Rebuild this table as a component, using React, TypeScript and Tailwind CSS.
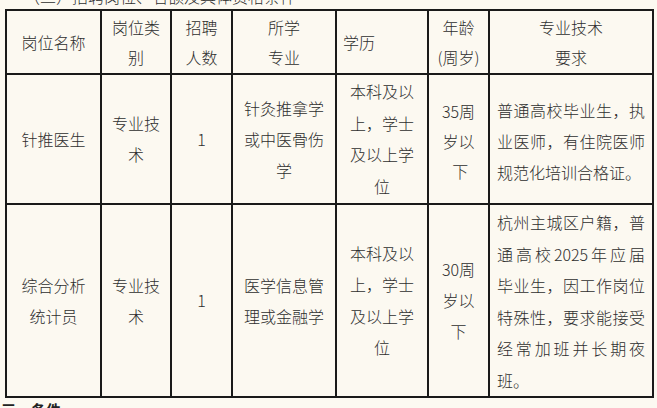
export default function App() {
  const cell = "bg-[#fcf9f1] flex flex-col justify-center";
  const center = `${cell} items-center text-center`;
  const just = "[text-align-last:justify] text-justify";

  return (
    <div className="w-[657px] h-[408px] overflow-hidden bg-[#fcf9f1] text-[#2e2e2e] text-[16px] font-light font-['Noto_Sans_CJK_SC',sans-serif]">
      {/* clipped caption above the table */}
      <div className="-mt-[14px] pl-[24px] leading-[20px] whitespace-nowrap">（二）招聘岗位、名额及具体资格条件</div>

      <div className="ml-[5px] mt-[3px] w-[649px] grid grid-cols-[93px_68px_59px_102px_90px_59px_162px] grid-rows-[62px_128px_191px] gap-[2px] p-[2px] bg-[#1a1a1a]">
        {/* header */}
        <div className={`${center} leading-[30px]`}>岗位名称</div>
        <div className={`${center} leading-[30px]`}>
          <div>岗位类</div>
          <div>别</div>
        </div>
        <div className={`${center} leading-[30px]`}>
          <div>招聘</div>
          <div>人数</div>
        </div>
        <div className={`${center} leading-[30px]`}>
          <div>所学</div>
          <div>专业</div>
        </div>
        <div className={`${cell} pl-[6px] leading-[30px]`}>学历</div>
        <div className={`${center} leading-[30px]`}>
          <div>年龄</div>
          <div>(周岁)</div>
        </div>
        <div className={`${center} leading-[30px]`}>
          <div>专业技术</div>
          <div>要求</div>
        </div>

        {/* row 1 */}
        <div className={`${center} leading-[31px]`}>针推医生</div>
        <div className={`${center} leading-[31px]`}>
          <div>专业技</div>
          <div>术</div>
        </div>
        <div className={`${center} leading-[31px]`}>1</div>
        <div className={`${center} leading-[31px]`}>
          <div>针灸推拿学</div>
          <div>或中医骨伤</div>
          <div>学</div>
        </div>
        <div className={`${center} leading-[31.5px]`}>
          <div>本科及以</div>
          <div>上，学士</div>
          <div>及以上学</div>
          <div>位</div>
        </div>
        <div className={`${center} leading-[30px] pt-[4px]`}>
          <div>35周</div>
          <div>岁以</div>
          <div>&nbsp;下</div>
        </div>
        <div className={`${cell} px-[7px] leading-[31px] pt-[4px]`}>
          <div className={just}>普通高校毕业生，执</div>
          <div className={just}>业医师，有住院医师</div>
          <div>规范化培训合格证。</div>
        </div>

        {/* row 2 */}
        <div className={`${center} leading-[31px]`}>
          <div>综合分析</div>
          <div>统计员</div>
        </div>
        <div className={`${center} leading-[31px]`}>
          <div>专业技</div>
          <div>术</div>
        </div>
        <div className={`${center} leading-[31px]`}>1</div>
        <div className={`${center} leading-[31px]`}>
          <div>医学信息管</div>
          <div>理或金融学</div>
        </div>
        <div className={`${center} leading-[31.5px]`}>
          <div>本科及以</div>
          <div>上，学士</div>
          <div>及以上学</div>
          <div>位</div>
        </div>
        <div className={`${center} leading-[31px]`}>
          <div>30周</div>
          <div>岁以</div>
          <div>下</div>
        </div>
        <div className={`${cell} px-[7px] leading-[31.5px] pt-[2px]`}>
          <div className={just}>杭州主城区户籍，普</div>
          <div className={just}>通高校2025年应届</div>
          <div className={just}>毕业生，因工作岗位</div>
          <div className={just}>特殊性，要求能接受</div>
          <div className={just}>经常加班并长期夜</div>
          <div>班。</div>
        </div>
      </div>

      <div className="mt-[2px] pl-[1px] leading-[20px] font-bold text-[15px] text-[#222]">三、条件</div>
    </div>
  );
}
